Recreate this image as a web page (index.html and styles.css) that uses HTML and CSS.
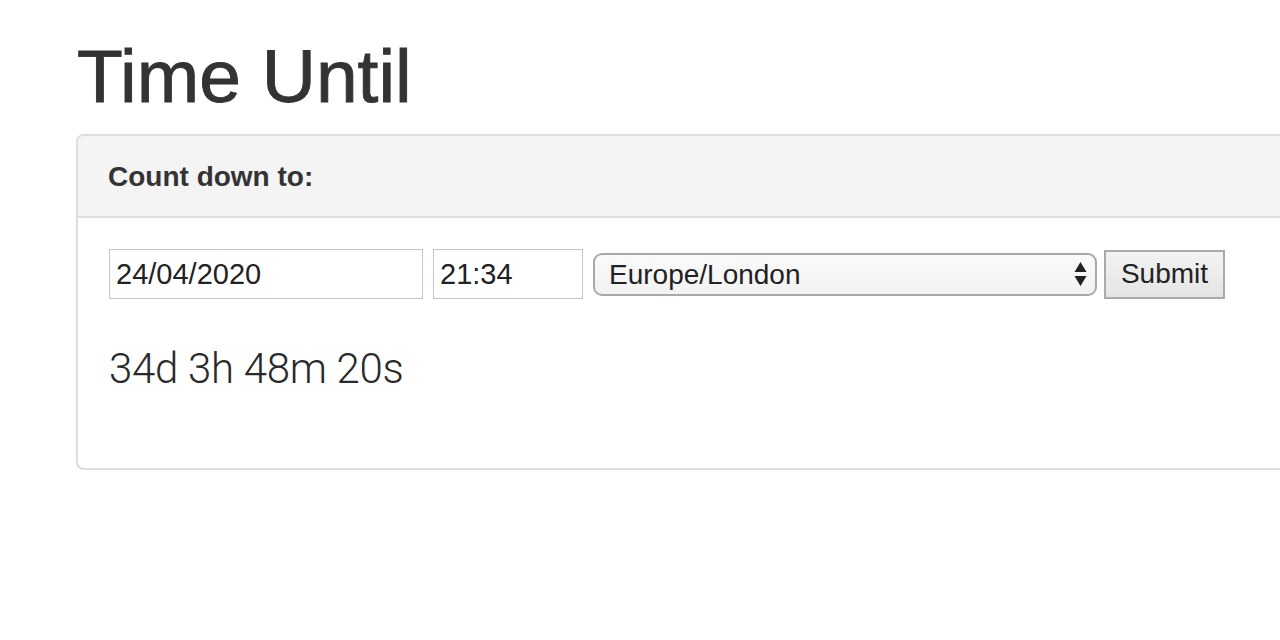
FILE: index.html
```html
<!DOCTYPE html>
<html>
<head>
<meta charset="utf-8">
<title>Time Until</title>
<link rel="stylesheet" href="styles.css">
</head>
<body>
<div class="container">
  <h1 class="title">Time Until</h1>
  <div class="panel">
    <div class="panel-heading">
      <h3 class="panel-title">Count down to:</h3>
    </div>
    <div class="panel-body">
      <form class="form-row">
        <input class="field field-date" type="text" value="24/04/2020">
        <input class="field field-time" type="text" value="21:34">
        <div class="select-wrap">
          <select class="tz-select">
            <option>Europe/London</option>
          </select>
          <svg class="select-arrows" width="13" height="26" viewBox="0 0 13 26">
            <path d="M6.5 1 L12.5 11 L0.5 11 Z" fill="#222"/>
            <path d="M6.5 25 L12.5 15 L0.5 15 Z" fill="#222"/>
          </svg>
        </div>
        <button class="btn-submit" type="button">Submit</button>
      </form>
      <div class="countdown">34d 3h 48m 20s</div>
    </div>
  </div>
</div>
</body>
</html>
```
FILE: styles.css
```css
html, body {
  margin: 0;
  padding: 0;
  overflow: hidden;
  background: #fff;
}
body {
  font-family: "Liberation Sans", Arial, sans-serif;
  color: #333;
}
.container {
  padding-left: 76px;
  padding-top: 31px;
}
.title {
  margin: 0 0 0 1px;
  font-size: 75px;
  font-weight: 400;
  line-height: 90px;
  color: #333;
  letter-spacing: 0;
  -webkit-text-stroke: 0.9px #333;
}
.panel {
  margin-top: 13px;
  width: 1300px;
  border: 2px solid #ddd;
  border-radius: 8px;
  background: #fff;
  box-shadow: 0 1px 2px rgba(0,0,0,0.05);
}
.panel-heading {
  background: #f4f4f4;
  border-bottom: 2px solid #ddd;
  border-radius: 6px 6px 0 0;
  padding: 0 30px;
  height: 80px;
  display: flex;
  align-items: center;
}
.panel-title {
  margin: 0;
  font-size: 28px;
  font-weight: 700;
  color: #333;
  padding-top: 2px;
}
.panel-body {
  padding: 31px 31px 0 31px;
  height: 250px;
  box-sizing: border-box;
}
.form-row {
  display: flex;
  align-items: center;
  margin: 0;
}
.field {
  box-sizing: border-box;
  height: 50px;
  border: 1px solid #c4c4c4;
  border-radius: 0;
  padding: 0 6px;
  font-family: "Liberation Sans", Arial, sans-serif;
  font-size: 29px;
  color: #222;
  background: #fff;
  outline: none;
}
.field-date { width: 314px; margin-right: 10px; }
.field-time { width: 150px; margin-right: 10px; }
.select-wrap {
  position: relative;
  width: 504px;
  height: 43px;
  margin-right: 7px;
}
.tz-select {
  -webkit-appearance: none;
  appearance: none;
  box-sizing: border-box;
  width: 100%;
  height: 43px;
  border: 2px solid #a9a9a9;
  border-radius: 9px;
  background: linear-gradient(#fafafa, #f2f2f2);
  padding: 0 14px;
  font-family: "Liberation Sans", Arial, sans-serif;
  font-size: 28px;
  color: #222;
  outline: none;
}
.select-arrows {
  position: absolute;
  right: 10px;
  top: 8px;
}
.btn-submit {
  box-sizing: border-box;
  width: 121px;
  height: 49px;
  border: 2px solid #aaa;
  border-radius: 0;
  background: linear-gradient(#f3f3f3, #e4e4e4);
  font-family: "Liberation Sans", Arial, sans-serif;
  font-size: 28px;
  color: #222;
  padding: 0;
}
.countdown {
  margin-top: 46px;
  font-family: "Roboto", sans-serif;
  font-weight: 300;
  font-size: 42px;
  line-height: 48px;
  color: #2a2a2a;
  letter-spacing: -0.3px;
}
```
